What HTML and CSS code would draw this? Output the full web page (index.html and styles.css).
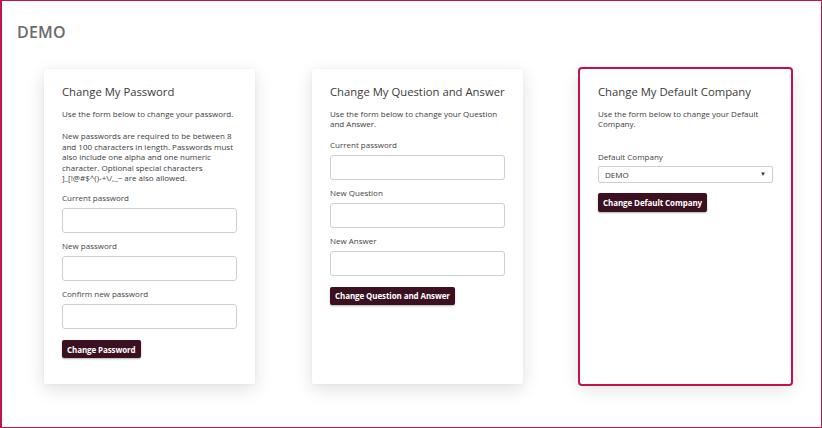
FILE: index.html
```html
<!DOCTYPE html>
<html lang="en">
<head>
<meta charset="utf-8">
<title>DEMO</title>
<link rel="stylesheet" href="styles.css">
</head>
<body>
<div class="frame">
  <h1 class="page-title">DEMO</h1>
  <div class="cards">
    <section class="card">
      <h2 class="card-title">Change My Password</h2>
      <p class="text intro">Use the form below to change your password.</p>
      <p class="text para">New passwords are required to be between 8 and 100 characters in length. Passwords must also include one alpha and one numeric character. Optional special characters ]_[!@#$^()-+\/,_~ are also allowed.</p>
      <div class="group">
        <label class="label">Current password</label>
        <input class="input" type="password">
      </div>
      <div class="group">
        <label class="label">New password</label>
        <input class="input" type="password">
      </div>
      <div class="group">
        <label class="label">Confirm new password</label>
        <input class="input" type="password">
      </div>
      <button class="btn">Change Password</button>
    </section>
    <section class="card">
      <h2 class="card-title">Change My Question and Answer</h2>
      <p class="text para">Use the form below to change your Question and Answer.</p>
      <div class="group">
        <label class="label">Current password</label>
        <input class="input" type="password">
      </div>
      <div class="group">
        <label class="label">New Question</label>
        <input class="input" type="text">
      </div>
      <div class="group">
        <label class="label">New Answer</label>
        <input class="input" type="text">
      </div>
      <button class="btn">Change Question and Answer</button>
    </section>
    <section class="card card-active">
      <h2 class="card-title">Change My Default Company</h2>
      <p class="text text-company">Use the form below to change your Default Company.</p>
      <div class="group">
        <label class="label">Default Company</label>
        <div class="select">
          <span>DEMO</span>
          <span class="caret">&#9660;</span>
        </div>
      </div>
      <button class="btn">Change Default Company</button>
    </section>
  </div>
</div>
</body>
</html>
```
FILE: styles.css
```css
* { box-sizing: border-box; }
html, body { margin: 0; padding: 0; background: #fff; }
body { font-family: "Open Sans", "Liberation Sans", sans-serif; color: #444; }
.frame {
  width: 822px;
  height: 428px;
  border: 1px solid #c2134b;
  border-left-width: 2px;
  overflow: hidden;
}
.page-title {
  margin: 22px 0 0 15px;
  font-size: 16px;
  line-height: 18px;
  font-weight: 600;
  color: #6a6a6a;
  letter-spacing: 0.2px;
}
.cards {
  display: flex;
  gap: 57px;
  margin-top: 28px;
  padding-left: 42px;
}
.card {
  width: 211px;
  height: 315px;
  background: #fff;
  border-radius: 2px;
  padding: 15px 18px 0 18px;
  box-shadow: 0 5px 18px rgba(0,0,0,0.13), 0 0 3px rgba(0,0,0,0.05);
}
.card-active { outline: 2px solid #c2134b; }
.card-title {
  margin: 0 0 10px 0;
  font-size: 11.3px;
  line-height: 15px;
  font-weight: 500;
  color: #3a3a3a;
  white-space: nowrap;
}
.text {
  margin: 0 0 10px 0;
  font-size: 8px;
  line-height: 10.4px;
  font-weight: 500;
  color: #3c3c3c;
}
.intro { margin-bottom: 12px; }
.para { margin-bottom: 10px; }
.text-company { margin-bottom: 22px; }
.group { margin-bottom: 8px; }
.label {
  display: block;
  font-size: 8px;
  line-height: 10px;
  font-weight: 500;
  color: #444;
  margin-bottom: 5px;
}
.input {
  display: block;
  width: 175px;
  height: 25px;
  border: 1px solid #cfcfcf;
  border-radius: 3px;
  background: #fff;
  margin: 0;
}
.select {
  width: 175px;
  height: 17px;
  border: 1px solid #cfcfcf;
  border-radius: 2px;
  display: flex;
  align-items: center;
  justify-content: space-between;
  padding: 0 6px;
  font-size: 8px;
  font-weight: 500;
  color: #333;
  margin-top: -1px;
}
.caret { font-size: 6px; color: #333; }
.btn {
  display: block;
  margin-top: 11px;
  height: 18px;
  padding: 0 5px;
  border: none;
  border-radius: 2px;
  background: #3b1122;
  color: #fff;
  font-family: inherit;
  font-size: 8px;
  font-weight: 700;
  letter-spacing: -0.1px;
  box-shadow: 0 1px 2px rgba(0,0,0,0.3);
}
.card-active .btn { height: 19px; margin-top: 10px; }
```
